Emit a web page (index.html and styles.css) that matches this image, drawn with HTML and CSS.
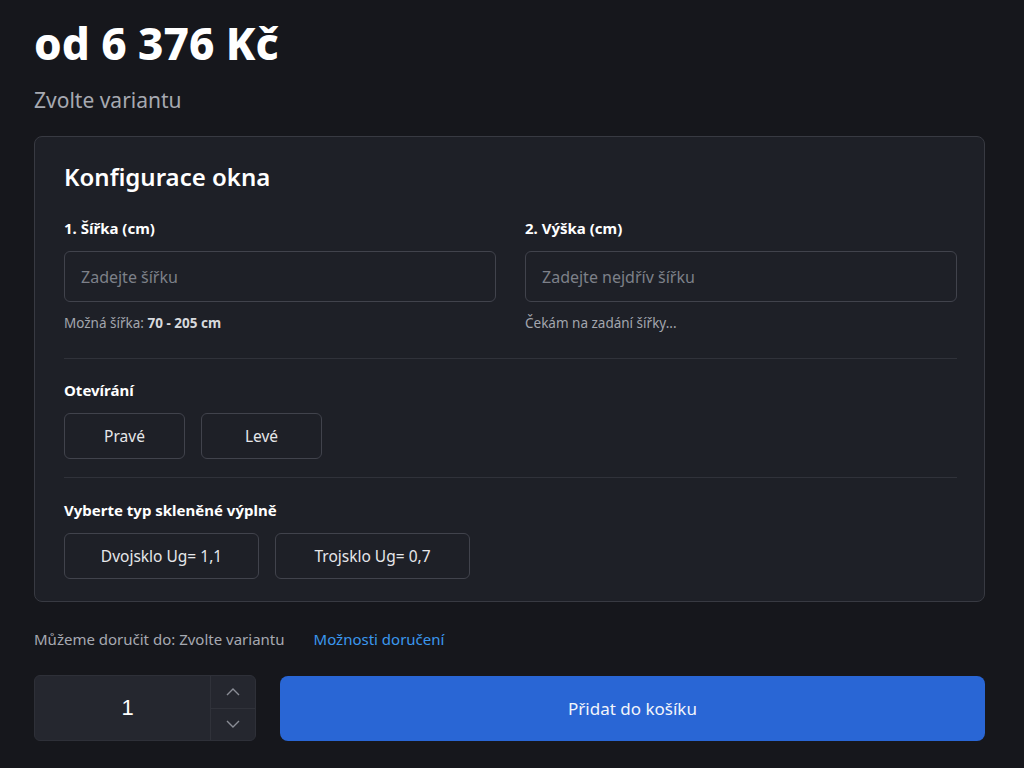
FILE: index.html
```html
<!DOCTYPE html>
<html lang="cs">
<head>
    <meta charset="UTF-8">
    <meta name="viewport" content="width=device-width, initial-scale=1.0">
    <title>Konfigurace okna</title>
    <link rel="stylesheet" href="styles.css">
</head>
<body>
    <div class="product">
        <h1 class="price">od 6 376 Kč</h1>
        <p class="variant">Zvolte variantu</p>

        <!-- Configurator card -->
        <div class="config-card">
            <h2>Konfigurace okna</h2>

            <div class="dims">
                <div class="field">
                    <label for="width">1. Šířka (cm)</label>
                    <input type="text" id="width" placeholder="Zadejte šířku">
                    <p class="hint">Možná šířka: <strong>70 - 205 cm</strong></p>
                </div>
                <div class="field">
                    <label for="height">2. Výška (cm)</label>
                    <input type="text" id="height" placeholder="Zadejte nejdřív šířku">
                    <p class="hint">Čekám na zadání šířky...</p>
                </div>
            </div>

            <div class="section">
                <h3>Otevírání</h3>
                <div class="options">
                    <button class="option small">Pravé</button>
                    <button class="option small">Levé</button>
                </div>
            </div>

            <div class="section">
                <h3>Vyberte typ skleněné výplně</h3>
                <div class="options">
                    <button class="option wide">Dvojsklo Ug= 1,1</button>
                    <button class="option wide">Trojsklo Ug= 0,7</button>
                </div>
            </div>
        </div>

        <div class="delivery">
            <span>Můžeme doručit do: Zvolte variantu</span>
            <a href="#">Možnosti doručení</a>
        </div>

        <div class="buy-row">
            <div class="qty">
                <div class="qty-value">1</div>
                <div class="qty-arrows">
                    <button class="arrow">
                        <svg width="16" height="10" viewBox="0 0 16 10"><path d="M2 8 L8 2 L14 8" fill="none" stroke="#8a8d96" stroke-width="1.4"/></svg>
                    </button>
                    <button class="arrow">
                        <svg width="16" height="10" viewBox="0 0 16 10"><path d="M2 2 L8 8 L14 2" fill="none" stroke="#8a8d96" stroke-width="1.4"/></svg>
                    </button>
                </div>
            </div>
            <button class="add-cart">Přidat do košíku</button>
        </div>
    </div>
</body>
</html>
```

FILE: styles.css
```css
* {
    box-sizing: border-box;
    margin: 0;
    padding: 0;
}

body {
    font-family: 'Noto Sans', 'Open Sans', sans-serif;
    background-color: #16171c;
    color: #f1f2f4;
}

.product {
    width: 951px;
    margin-left: 34px;
    padding-top: 13px;
}

.price {
    font-size: 44px;
    font-weight: 800;
    line-height: 60px;
    color: #fff;
}

.variant {
    font-size: 21px;
    color: #a6a9b1;
    margin-top: 13px;
    line-height: 28px;
}

.config-card {
    margin-top: 22px;
    background-color: #1e2027;
    border: 1px solid #383a42;
    border-radius: 8px;
    padding: 23px 27px 22px 29px;
}

.config-card h2 {
    font-size: 24px;
    font-weight: 600;
    line-height: 34px;
    color: #fff;
}

.dims {
    display: grid;
    grid-template-columns: 1fr 1fr;
    gap: 29px;
    margin-top: 23px;
    padding-bottom: 25px;
    border-bottom: 1px solid #30323a;
}

label, .section h3 {
    display: block;
    font-size: 15px;
    font-weight: 700;
    line-height: 22px;
    color: #fff;
}

.field input {
    display: block;
    width: 100%;
    height: 51px;
    margin-top: 12px;
    padding: 0 16px;
    font-family: inherit;
    font-size: 16px;
    color: #fff;
    background-color: #1e2027;
    border: 1px solid #41434c;
    border-radius: 6px;
    outline: none;
}

.field input::placeholder {
    color: #7d8089;
}

.hint {
    margin-top: 11px;
    font-size: 13.5px;
    line-height: 20px;
    color: #a3a6ae;
}

.hint strong {
    color: #d7d9dd;
}

.section {
    padding-top: 20px;
    padding-bottom: 18px;
    border-bottom: 1px solid #30323a;
}

.section:last-child {
    border-bottom: none;
    padding-bottom: 0;
    padding-top: 21px;
}

.options {
    display: flex;
    gap: 16px;
    margin-top: 12px;
}

.option {
    height: 46px;
    font-family: inherit;
    font-size: 15.5px;
    color: #e6e7ea;
    background-color: #1e2027;
    border: 1px solid #41434c;
    border-radius: 6px;
    cursor: pointer;
}

.option.small {
    width: 121px;
}

.option.wide {
    width: 195px;
}

.delivery {
    display: flex;
    gap: 29px;
    margin-top: 26px;
    font-size: 15px;
    line-height: 22px;
    color: #a6a9b1;
}

.delivery a {
    color: #3b97ee;
    text-decoration: none;
}

.buy-row {
    display: flex;
    gap: 24px;
    margin-top: 25px;
}

.qty {
    display: flex;
    width: 222px;
    height: 66px;
    background-color: #25272f;
    border: 1px solid #2e3038;
    border-radius: 6px;
    overflow: hidden;
}

.qty-value {
    flex: 1;
    display: flex;
    align-items: center;
    justify-content: center;
    padding-left: 10px;
    font-size: 22px;
    color: #fff;
    font-family: 'Liberation Sans', sans-serif;
}

.qty-arrows {
    width: 45px;
    display: flex;
    flex-direction: column;
    border-left: 1px solid #30323a;
}

.arrow {
    flex: 1;
    display: flex;
    align-items: center;
    justify-content: center;
    background: none;
    border: none;
    cursor: pointer;
}

.arrow:first-child {
    border-bottom: 1px solid #30323a;
}

.add-cart {
    flex: 1;
    height: 65px;
    margin-top: 1px;
    font-family: inherit;
    font-size: 17px;
    color: #f2f5fb;
    background-color: #2966d5;
    border: none;
    border-radius: 8px;
    cursor: pointer;
}
```
